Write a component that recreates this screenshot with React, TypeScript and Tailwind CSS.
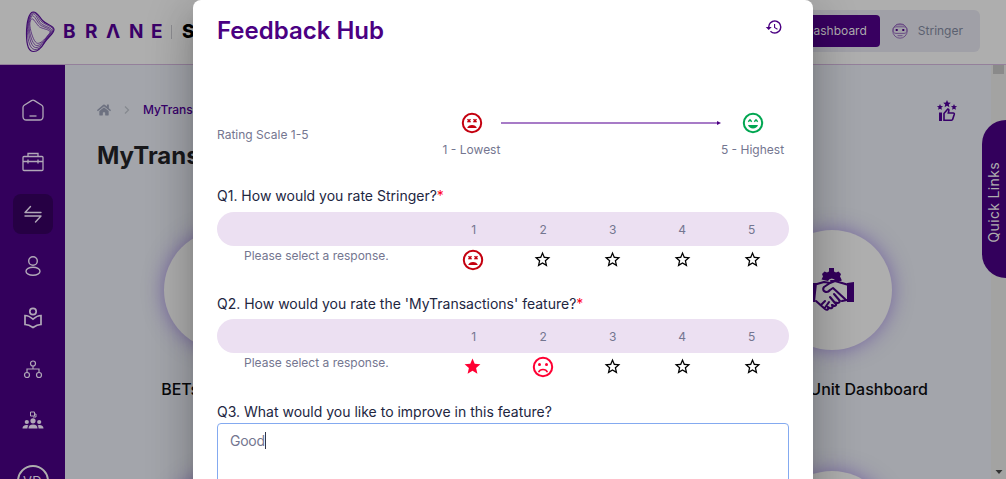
import React from "react";
import { MdHistory, MdStar, MdStarBorder } from "react-icons/md";
import { FaHome } from "react-icons/fa";

type FaceKind = "worst" | "bad" | "best";

function Face({ kind, className }: { kind: FaceKind; className?: string }) {
  return (
    <svg viewBox="0 0 24 24" width="24" height="24" className={className} fill="none" stroke="currentColor" strokeWidth="2">
      <circle cx="12" cy="12" r="9.200" />
      {kind === "worst" && (
        <>
          <path d="M7.500 8.200l3 3M10.500 8.200l-3 3M13.500 8.200l3 3M16.500 8.200l-3 3" strokeWidth="1.500" />
          <path d="M7.200 17c.6-1.800 2.400-3 4.800-3s4.200 1.200 4.800 3z" fill="currentColor" stroke="none" />
        </>
      )}
      {kind === "bad" && (
        <>
          <circle cx="8.500" cy="9.500" r="1.500" fill="currentColor" stroke="none" />
          <circle cx="15.500" cy="9.500" r="1.500" fill="currentColor" stroke="none" />
          <path d="M7.600 17.300c.8-1.900 2.500-2.800 4.400-2.800s3.600.9 4.400 2.800" strokeWidth="1.600" />
        </>
      )}
      {kind === "best" && (
        <>
          <path d="M7.300 10.800l1.700-2 1.700 2M13.300 10.800l1.700-2 1.700 2" strokeWidth="1.400" />
          <path d="M7 14h10c-.7 2.200-2.600 3.600-5 3.600S7.700 16.200 7 14z" fill="currentColor" stroke="none" />
        </>
      )}
    </svg>
  );
}

function BraneLogo() {
  return (
    <svg width="30" height="42" viewBox="0 0 30 42" fill="none" stroke="#3f0a6e" strokeWidth="0.700">
      <path strokeWidth="1.200" d="M8 1C4 1.500 1.500 11 1.500 23S4 40.500 8.500 40.500 17 36 20 31s9-8.500 9-12.500-8-5-11.500-9S12 .5 8 1z" />
      <path d="M7.500 2C4 4 2 13 2.500 21.500S5 38 9.500 38.500 18 34 20.500 29.500 28 22 28 18.800s-7.500-4.800-11-7.800S11.500 0 7.500 2z" />
      <path d="M7 3.500c-3 3-4.500 9.500-3.500 17S6.500 36 10.500 36.500 18.500 32 21 28s6-6 6-8.500-7-4-10.500-6.500S10.500 0 7 3.500z" />
      <path d="M6.500 5.500C4 9 3.500 14 4.500 20S8 34 11.500 34.500 19 30 21.500 26.500 26 22 26 20s-6.500-3.500-10-5.500S9 2 6.500 5.500z" />
      <path d="M6 8.500c-2 3.500-1 8 0 12S9.500 31.800 12.500 32.300 19.500 28.500 22 25.500s3-3.500 3-5-6-2.500-9.500-4S8 5 6 8.500z" />
    </svg>
  );
}

const sideIcons: React.ReactNode[] = [
  <svg key="home" width="24" height="24" viewBox="0 0 24 24" fill="none" stroke="currentColor" strokeWidth="1.300">
    <path d="M2 9.500c0-1 .4-1.700 1.200-2.200L10.500 2.600c1-.6 2-.6 3 0l7.300 4.700c.8.500 1.200 1.200 1.200 2.200v9c0 2-1.300 3.500-3.500 3.500h-13C3.300 22 2 20.500 2 18.500z" />
    <path d="M8.500 18h7" />
  </svg>,
  <svg key="case" width="24" height="24" viewBox="0 0 24 24" fill="none" stroke="currentColor" strokeWidth="1.300">
    <rect x="2" y="6.500" width="20" height="14" rx="1" />
    <path d="M7 6.500v-3h10v3M2 11.500h20M7 9.500v4M17 9.500v4" />
  </svg>,
  <svg key="swap" width="24" height="24" viewBox="0 0 24 24" fill="none" stroke="currentColor" strokeWidth="1.400" strokeLinecap="round" strokeLinejoin="round">
    <path d="M20 10.500H4L9.500 4.500M4 14h16l-5.500 6" />
  </svg>,
  <svg key="person" width="24" height="24" viewBox="0 0 24 24" fill="none" stroke="currentColor" strokeWidth="1.400">
    <circle cx="12" cy="7" r="4.300" />
    <ellipse cx="12" cy="17.300" rx="7" ry="4" />
  </svg>,
  <svg key="reader" width="24" height="24" viewBox="0 0 24 24" fill="none" stroke="currentColor" strokeWidth="1.700">
    <circle cx="12" cy="5.500" r="3.200" />
    <path d="M4 9.500c3 0 5.500 1.500 8 3.700 2.500-2.200 5-3.700 8-3.700v9c-3 0-5.500 1.200-8 3-2.500-1.800-5-3-8-3z" />
  </svg>,
  <svg key="tree" width="24" height="24" viewBox="0 0 24 24" fill="none" stroke="currentColor" strokeWidth="1.200">
    <circle cx="12" cy="5.500" r="2.500" />
    <circle cx="6" cy="17" r="2.500" />
    <circle cx="18" cy="17" r="2.500" />
    <path d="M12 8v3M6 14.500V11h12v3.500" />
  </svg>,
  <svg key="team" width="24" height="24" viewBox="0 0 24 24" fill="currentColor">
    <path d="M9.500 2h4v4h-4zM14 4h1v3h-3" fill="none" stroke="currentColor" strokeWidth="1" />
    <circle cx="12" cy="10.800" r="2.600" />
    <circle cx="5.800" cy="12" r="2.100" />
    <circle cx="18.200" cy="12" r="2.100" />
    <path d="M7.500 18.500c0-2.500 1.500-4 4.500-4s4.500 1.500 4.500 4zM1.500 18.500c0-2.300 1.500-3.500 4-3.500 1 0 1.500.3 1.900.6-.7.800-1 1.700-1 2.900zM22.500 18.500c0-2.300-1.500-3.500-4-3.500-1 0-1.500.3-1.900.6.7.8 1 1.700 1 2.900z" />
  </svg>,
];

function Sidebar() {
  return (
    <nav className="flex w-[65px] shrink-0 flex-col items-center gap-3 bg-[#33005c] pt-[25px] text-[#b1a8b8]">
      {sideIcons.map((icon, i) => (
        <div key={i} className={i === 2 ? "flex size-10 shrink-0 items-center justify-center rounded-lg bg-[#260044]" : "flex size-10 shrink-0 items-center justify-center"}>
          {icon}
        </div>
      ))}
      <div className="mt-[11px] flex size-8 shrink-0 items-center justify-center rounded-full border-2 border-[#aeaeae] text-[13px] leading-4 tracking-wide">VD</div>
    </nav>
  );
}

function Header() {
  return (
    <header className="flex h-[65px] shrink-0 items-center border-b border-[#94809b] bg-[#aeaeae] pr-[26px] pl-[25px]">
      <BraneLogo />
      <div className="ml-[8px] flex text-[19px] leading-6 font-bold text-[#3a0068]">
        <span className="w-[22px]">B</span>
        <span className="w-[21px]">R</span>
        <span className="w-[23px]">Λ</span>
        <span className="w-[22px]">N</span>
        <span className="w-[21px]">E</span>
      </div>
      <div className="-ml-px h-3.5 w-px bg-[#8c8c90]" />
      <span className="ml-[10px] text-[19px] font-extrabold text-black">Stringer</span>
      <div className="mt-[-2px] ml-auto flex h-[42px] items-center rounded-md bg-[#a0a0a7] pr-[17px] pl-[5px] text-xs">
        <div className="flex h-8 items-center rounded bg-[#380060] px-[13px] text-[#aeaeae]">Dashboard</div>
        <svg className="ml-3 text-[#664582]" width="16" height="16" viewBox="0 0 16 16" fill="none" stroke="currentColor" strokeWidth="0.900">
          <circle cx="8" cy="8" r="7.200" />
          <path d="M1 7c0-2 1-3.200 3-3.200h8c2 0 3 1.200 3 3.200s-1 3.400-3 3.400H4C2 10.400 1 9 1 7zM5.500 12.700h5M4 1.800h8" />
          <path d="M3.700 6h2v2h-2zM10.300 6h2v2h-2z" fill="#380060" stroke="none" />
        </svg>
        <span className="ml-[10px] text-[#5b6070]">Stringer</span>
      </div>
    </header>
  );
}

function RateIcon() {
  return (
    <svg width="22" height="22" viewBox="0 0 22 22" fill="#38006a">
      <path d="M11 0l1.100 2.500 2.700.2-2 1.800.6 2.700L11 5.800 8.600 7.200l.6-2.700-2-1.800 2.700-.2zM4 4l.9 2 2.200.2-1.700 1.400.5 2.200L4 8.700 2.100 9.800l.5-2.200L.9 6.200 3.100 6zM18 4l.9 2 2.200.2-1.700 1.400.5 2.200-1.900-1.100-1.900 1.100.5-2.200-1.700-1.400 2.200-.2zM3 12.500h3V21H3z" />
      <path d="M8 13.500L11.800 9c1 0 1.300.8 1 1.800L12.300 13h5c.8 0 1.200.6 1 1.300l-1.600 5c-.2.600-.6.900-1.200.9H8z" fill="none" stroke="#38006a" strokeWidth="1.600" />
    </svg>
  );
}

function Handshake() {
  return (
    <svg width="46" height="46" viewBox="0 0 46 46" fill="none" stroke="#33005c" strokeWidth="2.100" strokeLinejoin="round" strokeLinecap="round">
      <path d="M12.500 12.500l1.500-3-1-2.500 2.500-2.500L18 5.500l2-1V1h5v3.500l2 1 2.500-1L32 7l-1 2.500 1.500 3v1.500h-6a4 4 0 0 0-7.500 0z" fill="#33005c" stroke="none" />
      <path d="M1 16h7l-2 19H1zM38 16l7-1v20h-7z" fill="#33005c" stroke="none" />
      <path d="M8 17l7-2 6 1M21 16l5-2 12 3.500M21 16l-6 4c-3 4 3 7 6 3l3-2 12 11M26 14h-4M7 34l9 8c2 1.500 4 .5 3-2 3 2.500 5.500 1 4-2 3.500 2 5 0 3.500-2.500 3.500 1.500 5-.5 3.500-2.500M38 33l-5 1M12 38l4-4M16.500 40l3.500-5M21 30l5 6M25 27l6 7" />
    </svg>
  );
}

function Card({ label, icon }: { label?: string; icon?: React.ReactNode }) {
  return (
    <div className="flex h-[241px] flex-col items-center">
      {label !== undefined && (
        <>
          <div className="flex size-[120px] shrink-0 items-center justify-center rounded-full bg-[#aeaeae] shadow-[0_0_20px_0px_rgba(70,35,150,0.5)]">{icon}</div>
          <div className="mt-[27px] text-base leading-6 font-medium whitespace-nowrap text-[#09090b]">{label}</div>
        </>
      )}
    </div>
  );
}

function Question({ title, value, face, className, note }: { title: string; value: number; face: FaceKind; className: string; note: string }) {
  return (
    <section className={className}>
      <h3 className="text-sm leading-5 font-normal text-[#22263f]">
        {title}
        <span className="text-[#ff0022]">*</span>
      </h3>
      <div className={note}>
        {[1, 2, 3, 4, 5].map((n) => (
          <span key={n} className="w-[69.500px] pl-px text-center">{n}</span>
        ))}
      </div>
      <div className="flex h-[27px]">
        <p className="w-[220.500px] pl-[27px] text-xs leading-5 text-[#747690]">Please select a response.</p>
        {[1, 2, 3, 4, 5].map((n) => (
          <div key={n} className="flex w-[70px] items-center justify-center">
            {n === value ? (
              <Face kind={face} className={face === "worst" ? "text-[#c4000f]" : "text-[#ff0033]"} />
            ) : n < value ? (
              <MdStar className="size-[19px] text-[#ff0033]" />
            ) : (
              <MdStarBorder className="size-[19px] text-black" />
            )}
          </div>
        ))}
      </div>
    </section>
  );
}

function FeedbackDialog() {
  return (
    <div role="dialog" className="absolute top-0 left-[193px] flex h-[560px] w-[620px] flex-col rounded-lg bg-white px-6 shadow-[0_11px_15px_-7px_rgba(0,0,0,0.2),0_24px_38px_3px_rgba(0,0,0,0.14),0_9px_46px_8px_rgba(0,0,0,0.12)]">
      <div className="flex items-start justify-between pt-[15px] pr-[6.500px]">
        <h2 className="text-2xl leading-8 font-semibold text-[#4b0082]">Feedback Hub</h2>
        <MdHistory className="mt-[3px] size-[18px] text-[#4b0082]" />
      </div>
      <div className="mt-[64px] flex h-[50px] items-start text-xs leading-4 text-[#747690]">
        <span className="mt-4 w-[221.500px]">Rating Scale 1-5</span>
        <div className="flex w-[66px] flex-col items-center">
          <Face kind="worst" className="text-[#c4000f]" />
          <span className="mt-[7px] whitespace-nowrap">1 - Lowest</span>
        </div>
        <svg className="mt-[9px] -ml-[3.500px]" width="220" height="6" viewBox="0 0 220 6">
          <path d="M0 3h217" stroke="#a77bc7" strokeWidth="2" />
          <path d="M216 1l4 2-4 2z" fill="#4b0082" />
        </svg>
        <div className="flex w-[63px] flex-col items-center">
          <Face kind="best" className="text-[#00a651]" />
          <span className="mt-[7px] whitespace-nowrap">5 - Highest</span>
        </div>
      </div>
      <Question
        className="mt-[25px]"
        note="mt-1.5 flex h-[34px] items-center rounded-full bg-[#ece0f2] pt-px pl-[221.500px] text-xs text-[#747690]"
        title="Q1. How would you rate Stringer?"
        value={1}
        face="worst"
      />
      <Question
        className="mt-[21px]"
        note="mt-[5px] flex h-[34px] items-center rounded-full bg-[#ece0f2] pt-px pl-[221.500px] text-xs text-[#747690]"
        title="Q2. How would you rate the 'MyTransactions' feature?"
        value={2}
        face="bad"
      />
      <h3 className="mt-[22px] text-sm leading-5 text-[#22263f]">Q3. What would you like to improve in this feature?</h3>
      <div className="mt-px flex h-[100px] items-start rounded border border-[#84aaf0] px-3 py-2 text-sm leading-[18px] tracking-[-0.020em] text-[#747690]">
        Good
        <span className="h-[17px] w-px bg-[#33364a]" />
      </div>
    </div>
  );
}

export default function App() {
  return (
    <div className="relative flex h-[479px] w-[1006px] flex-col overflow-hidden bg-[#a3a5ab] font-['Inter',sans-serif]">
      <Header />
      <div className="flex h-[414px]">
        <Sidebar />
        <main className="flex w-[926px] shrink-0 flex-col overflow-hidden">
          <div className="flex h-[57px] shrink-0 items-end justify-between pr-[33px] pl-8">
            <div className="mb-[3px] flex items-center text-xs font-medium text-[#38006a]">
              <FaHome className="size-[14px] text-[#6d7180]" />
              <svg className="mx-3 text-[#85888f]" width="8" height="8" viewBox="0 0 8 8" fill="none" stroke="currentColor" strokeWidth="1.200">
                <path d="M2 0.500l3.500 3.500L2 7.500" />
              </svg>
              <span className="text-xs leading-[19px]">MyTransactions</span>
            </div>
            <RateIcon />
          </div>
          <h1 className="mt-[18px] ml-8 text-2xl leading-8 font-bold text-[#18181b]">MyTransactions</h1>
          <div className="mt-[58px] ml-[7px] grid w-[912px] grid-cols-3 self-start">
            <Card label="BETs Dashboard" />
            <Card />
            <Card label="Business Unit Dashboard" icon={<Handshake />} />
            <Card label="" />
            <Card />
            <Card label="" />
          </div>
        </main>
        <div className="flex w-[15px] flex-col items-center justify-between bg-[#a3a3a2]">
          <div className="h-[9px] w-[11px] bg-[#8a8a8a]" />
          <svg className="mb-[5px]" width="8" height="4" viewBox="0 0 8 4"><path d="M0.500 0h7L4 4z" fill="#333" /></svg>
        </div>
      </div>
      <div className="absolute top-[120px] right-0 flex h-[158px] w-6 items-center justify-center rounded-l-3xl bg-[#33005c] pt-[6px]">
        <span className="rotate-180 text-sm leading-6 tracking-wide text-[#aeaeae] [writing-mode:vertical-rl]">Quick Links</span>
      </div>
      <FeedbackDialog />
    </div>
  );
}
